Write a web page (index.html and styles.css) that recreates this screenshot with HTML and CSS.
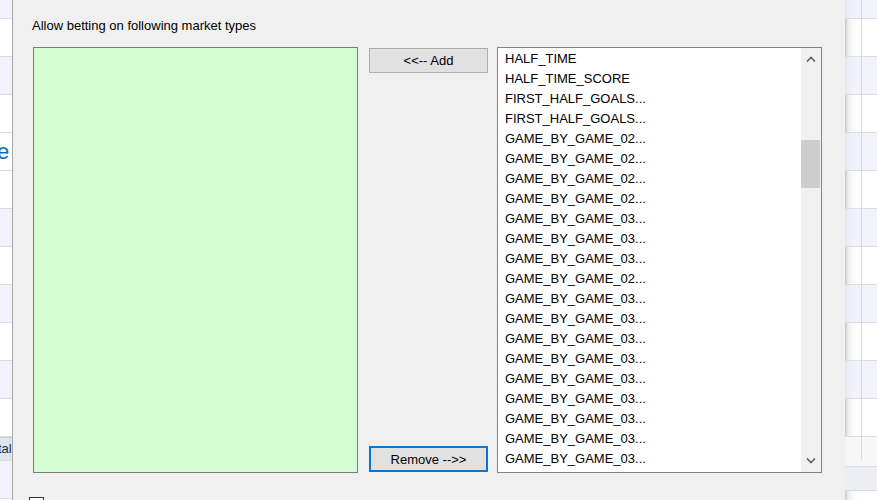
FILE: index.html
```html
<!DOCTYPE html>
<html lang="en">

<head>
    <meta charset="UTF-8">
    <title>Market types</title>
    <link rel="stylesheet" href="styles.css">
</head>

<body>

    <div class="screen">
        <!-- grid behind the dialog, left side -->
        <div class="grid grid-left">
            <div class="row alt short"></div>
            <div class="row"></div>
            <div class="row alt"></div>
            <div class="row"></div>
            <div class="row"><span class="link-text">e</span></div>
            <div class="row"></div>
            <div class="row alt"></div>
            <div class="row"></div>
            <div class="row alt"></div>
            <div class="row"></div>
            <div class="row alt"></div>
            <div class="row"></div>
            <div class="row head"><span class="head-text">tal</span></div>
            <div class="row alt"></div>
        </div>

        <div class="dialog">
            <div class="caption">Allow betting on following market types</div>

            <div class="lists">
                <div class="listbox allowed"></div>

                <div class="buttons">
                    <button class="btn">&lt;&lt;-- Add</button>
                    <button class="btn focused">Remove --&gt;&gt;</button>
                </div>

                <div class="listbox available">
                    <div class="items" id="items"></div>
                    <div class="scrollbar">
                        <div class="arrow">
                            <svg viewBox="0 0 10 6" width="10" height="6">
                                <path d="M1 5.5L5 1.5L9 5.5" fill="none" stroke="#606060" stroke-width="1.6" />
                            </svg>
                        </div>
                        <div class="track">
                            <div class="thumb"></div>
                        </div>
                        <div class="arrow">
                            <svg viewBox="0 0 10 6" width="10" height="6">
                                <path d="M1 0.5L5 4.5L9 0.5" fill="none" stroke="#606060" stroke-width="1.6" />
                            </svg>
                        </div>
                    </div>
                </div>
            </div>

            <div class="check-row">
                <span class="checkbox"></span>
            </div>
        </div>

        <!-- grid behind the dialog, right side -->
        <div class="grid grid-right">
            <div class="row alt short"></div>
            <div class="row"></div>
            <div class="row alt"></div>
            <div class="row"></div>
            <div class="row alt"></div>
            <div class="row"></div>
            <div class="row alt"></div>
            <div class="row"></div>
            <div class="row alt"></div>
            <div class="row"></div>
            <div class="row alt"></div>
            <div class="row"></div>
            <div class="row bottom"></div>
            <div class="row bottom alt"></div>
        </div>
    </div>

    <script>
        // market types still available on the right
        const marketTypes = [
            'HALF_TIME',
            'HALF_TIME_SCORE',
            'FIRST_HALF_GOALS...',
            'FIRST_HALF_GOALS...',
            'GAME_BY_GAME_02...',
            'GAME_BY_GAME_02...',
            'GAME_BY_GAME_02...',
            'GAME_BY_GAME_02...',
            'GAME_BY_GAME_03...',
            'GAME_BY_GAME_03...',
            'GAME_BY_GAME_03...',
            'GAME_BY_GAME_02...',
            'GAME_BY_GAME_03...',
            'GAME_BY_GAME_03...',
            'GAME_BY_GAME_03...',
            'GAME_BY_GAME_03...',
            'GAME_BY_GAME_03...',
            'GAME_BY_GAME_03...',
            'GAME_BY_GAME_03...',
            'GAME_BY_GAME_03...',
            'GAME_BY_GAME_03...'
        ];

        const list = document.getElementById('items');
        marketTypes.forEach(name => {
            const div = document.createElement('div');
            div.className = 'item';
            div.textContent = name;
            list.appendChild(div);
        });
    </script>

</body>

</html>
```

FILE: styles.css
```css
body {
    margin: 0;
    font-family: "Liberation Sans", Arial, sans-serif;
    font-size: 13px;
    color: #000;
    background: #fff;
}

.screen {
    display: flex;
    width: 877px;
    height: 500px;
    overflow: hidden;
}

/* background grid */
.grid {
    display: flex;
    flex-direction: column;
    background: #fff;
}

.grid-left {
    width: 12px;
    border-right: 1px solid #a8a8a8;
}

.grid-right {
    flex: 1;
    position: relative;
    background: linear-gradient(to right, #c8c8c8 0, #ececec 3px, #fafafa 8px, transparent 14px);
}

.grid-right::after {
    content: "";
    position: absolute;
    left: 16px;
    top: 0;
    bottom: 40px;
    border-left: 1px solid #dadada;
}

.row {
    height: 37px;
    flex: none;
    border-bottom: 1px solid #dcdcdc;
    overflow: hidden;
    white-space: nowrap;
}

.row.short {
    height: 18px;
}

.row.alt {
    background-color: rgba(236, 236, 252, 0.7);
}

.row.head {
    height: 22px;
    background: #dde5ee;
    border-top: 1px solid #c8ccd4;
}

.row.bottom {
    height: 29px;
    background: #f7f7f7;
}

.grid-right .row.bottom.alt {
    height: 23px;
    background: #ededf5;
}

.link-text {
    display: block;
    margin-left: -3px;
    margin-top: 8px;
    color: #1565c0;
    font-size: 22px;
    line-height: 22px;
}

.head-text {
    display: block;
    margin-left: -2px;
    margin-top: 3px;
    color: #1f2a4a;
    font-size: 13px;
}

/* dialog */
.dialog {
    width: 832px;
    flex: none;
    background: #f0f0f0;
    padding: 18px 0 0 20px;
    box-sizing: border-box;
}

.caption {
    line-height: 15px;
    margin-left: -1px;
}

.lists {
    display: flex;
    margin-top: 14px;
    height: 426px;
}

.listbox {
    width: 325px;
    box-sizing: border-box;
    border: 1px solid #7a7a7a;
}

.allowed {
    background: #d4fdd4;
}

.buttons {
    display: flex;
    flex-direction: column;
    justify-content: space-between;
    width: 119px;
    margin: 0 9px 0 11px;
    padding: 1px 0;
}

.btn {
    height: 25px;
    width: 119px;
    background: #e1e1e1;
    border: 1px solid #adadad;
    font-family: "Liberation Sans", Arial, sans-serif;
    font-size: 13px;
    color: #000;
    padding: 0;
}

.btn.focused {
    height: 26px;
    border: 2px solid #0078d7;
}

.available {
    display: flex;
    background: #fff;
    border-color: #828282;
}

.items {
    flex: 1;
    padding: 1px 0 0 7px;
    overflow: hidden;
}

.item {
    line-height: 20px;
    white-space: nowrap;
}

.scrollbar {
    width: 20px;
    display: flex;
    flex-direction: column;
    background: #f0f0f0;
}

.arrow {
    height: 22px;
    display: flex;
    align-items: center;
    justify-content: center;
    flex: none;
}

.track {
    flex: 1;
}

.thumb {
    margin-top: 70px;
    height: 48px;
    width: 19px;
    background: #cdcdcd;
}

.check-row {
    margin-top: 24px;
    padding-left: 0;
    margin-left: -4px;
}

.checkbox {
    display: block;
    width: 13px;
    height: 13px;
    border: 1px solid #333;
    background: #fff;
}
```
